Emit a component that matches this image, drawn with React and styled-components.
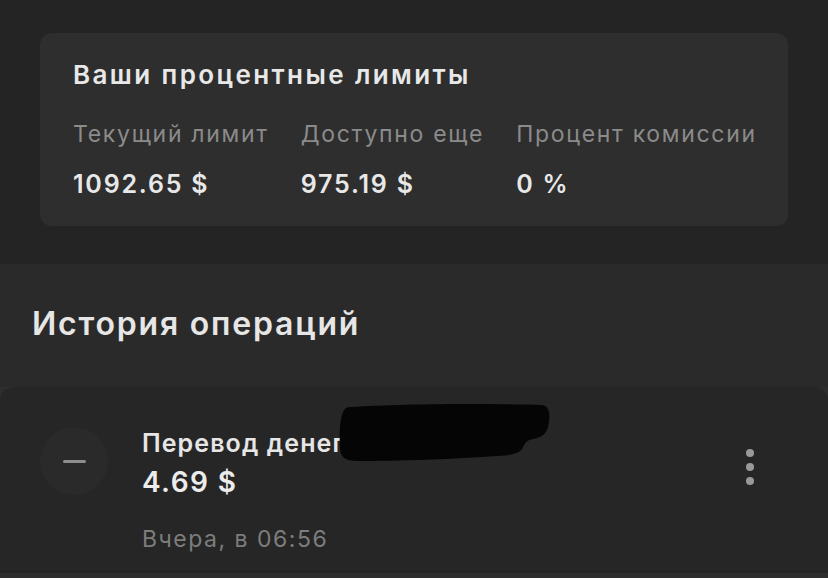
import React from 'react';
import styled, { createGlobalStyle } from 'styled-components';

const GlobalStyle = createGlobalStyle`
  html, body {
    margin: 0;
    padding: 0;
    background: #242424;
    font-family: Inter, 'Noto Sans', sans-serif;
    -webkit-font-smoothing: antialiased;
  }
`;

const Page = styled.div`
  width: 828px;
  height: 578px;
  overflow: hidden;
  display: flex;
  flex-direction: column;
  background: #2e2e2e;
`;

const TopPanel = styled.div`
  height: 265px;
  box-sizing: border-box;
  padding: 33px 40px 0;
  background: #242424;
  border-bottom: 1px solid #2c2c2c;
`;

const LimitsCard = styled.div`
  height: 193px;
  box-sizing: border-box;
  padding: 25px 33px 0;
  background: #2e2e2e;
  border-radius: 12px;
`;

const CardTitle = styled.div`
  font-size: 26px;
  line-height: 34px;
  font-weight: 600;
  color: #e8e8e8;
  letter-spacing: 2.4px;
`;

const Stats = styled.div`
  display: flex;
  gap: 32px;
  margin-top: 27px;
`;

const Stat = styled.div`
  display: flex;
  flex-direction: column;
  gap: 20px;
`;

const StatLabel = styled.div`
  font-size: 23px;
  line-height: 30px;
  font-weight: 400;
  color: #8b8b8b;
  white-space: nowrap;
  letter-spacing: 1.7px;
`;

const StatValue = styled.div`
  font-size: 25px;
  line-height: 30px;
  font-weight: 600;
  color: #e8e8e8;
  letter-spacing: 1.8px;
`;

const History = styled.div`
  height: 122px;
  box-sizing: border-box;
  padding: 39px 32px 0;
  background: #2a2a2a;
`;

const HistoryTitle = styled.div`
  font-size: 32px;
  line-height: 40px;
  font-weight: 600;
  color: #e6e6e6;
  letter-spacing: 1.8px;
`;

const OperationCard = styled.div`
  position: relative;
  height: 186px;
  box-sizing: border-box;
  padding: 40px 40px 0;
  background: #262626;
  border-radius: 14px 14px 0 0;
  display: flex;
  align-items: flex-start;
  gap: 36px;
`;

const OpIcon = styled.div`
  width: 68px;
  height: 68px;
  flex-shrink: 0;
  border-radius: 50%;
  background: #2a2a2a;
  display: flex;
  align-items: center;
  justify-content: center;
  &::before {
    content: '';
    width: 23px;
    height: 3px;
    border-radius: 2px;
    background: #8e8e8e;
  }
`;

const OpBody = styled.div`
  flex: 1;
  display: flex;
  flex-direction: column;
  margin-left: -2px;
`;

const OpTitle = styled.div`
  font-size: 25px;
  line-height: 30px;
  font-weight: 600;
  color: #e6e6e6;
  letter-spacing: 1.1px;
  margin-top: 1px;
`;

const OpAmount = styled.div`
  margin-top: 6px;
  font-size: 28px;
  line-height: 36px;
  font-weight: 600;
  color: #ececec;
  letter-spacing: 1.4px;
`;

const OpDate = styled.div`
  margin-top: 25px;
  font-size: 23px;
  line-height: 28px;
  font-weight: 400;
  color: #7d7d7d;
  letter-spacing: 1.5px;
`;

const Kebab = styled.div`
  display: flex;
  flex-direction: column;
  gap: 6px;
  margin-top: 22px;
  margin-right: 34px;
`;

const Dot = styled.span`
  width: 8px;
  height: 8px;
  border-radius: 50%;
  background: #999;
`;

const Redaction = styled.svg`
  position: absolute;
  left: 337px;
  top: 16px;
`;

const stats = [
  { label: 'Текущий лимит', value: '1092.65 $' },
  { label: 'Доступно еще', value: '975.19 $' },
  { label: 'Процент комиссии', value: '0 %' },
];

const App = () => (
  <>
    <GlobalStyle />
    <Page>
      <TopPanel>
        <LimitsCard>
          <CardTitle>Ваши процентные лимиты</CardTitle>
          <Stats>
            {stats.map(({ label, value }) => (
              <Stat key={label}>
                <StatLabel>{label}</StatLabel>
                <StatValue>{value}</StatValue>
              </Stat>
            ))}
          </Stats>
        </LimitsCard>
      </TopPanel>
      <History>
        <HistoryTitle>История операций</HistoryTitle>
      </History>
      <OperationCard>
        <OpIcon />
        <OpBody>
          <OpTitle>Перевод денег</OpTitle>
          <OpAmount>4.69 $</OpAmount>
          <OpDate>Вчера, в 06:56</OpDate>
        </OpBody>
        <Kebab>
          <Dot />
          <Dot />
          <Dot />
        </Kebab>
        <Redaction width="216" height="62" viewBox="0 0 216 62">
          <path
            d="M14 4 C60 1 150 0 205 2 C212 3 213 10 212 18 C211 28 208 34 196 36 C190 37 188 40 186 44 C184 50 176 52 160 53 C120 56 60 58 20 58 C8 58 3 54 3 44 C2 30 3 16 6 9 C8 5 10 4 14 4 Z"
            fill="#050505"
          />
        </Redaction>
      </OperationCard>
    </Page>
  </>
);

export default App;
